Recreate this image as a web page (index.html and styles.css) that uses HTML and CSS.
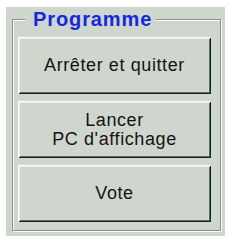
FILE: index.html
```html
<!DOCTYPE html>
<html lang="fr">
<head>
<meta charset="utf-8">
<title>Programme</title>
<link rel="stylesheet" href="styles.css">
</head>
<body>
<div class="panel">
  <div class="group">
    <div class="group-title">Programme</div>
    <button class="btn">Arrêter et quitter</button>
    <button class="btn">Lancer<br>PC d'affichage</button>
    <button class="btn">Vote</button>
  </div>
</div>
</body>
</html>
```
FILE: styles.css
```css
html, body {
  margin: 0;
  padding: 0;
  background: #ffffff;
}
.panel {
  margin: 7px 0 0 6px;
  width: 219px;
  height: 229px;
  background: #cfd6cd;
  padding: 12px 0 0 6px;
  box-sizing: border-box;
}
.group {
  position: relative;
  width: 209px;
  height: 212px;
  box-sizing: border-box;
  border: 1px solid #87918a;
  box-shadow: 1px 1px 0 #ffffff, inset 1px 1px 0 #ffffff;
  padding: 17px 9px 8px 5px;
  display: flex;
  flex-direction: column;
  gap: 7px;
}
.group-title {
  position: absolute;
  left: 12px;
  top: -12px;
  padding: 0 4px 0 8px;
  background: #cfd6cd;
  color: #1428dc;
  font-family: "Liberation Sans", Arial, sans-serif;
  font-weight: bold;
  font-size: 20px;
  letter-spacing: 0.9px;
  line-height: 22px;
}
.btn {
  height: 57px;
  width: 193px;
  margin: 0;
  padding: 0;
  background: #cfd6cd;
  border: 0;
  box-shadow: inset 1px 1px 0 #ffffff, inset -1px -1px 0 #17221f, inset 2px 2px 0 #e6ebe4, inset -2px -2px 0 #5f6a64;
  font-family: "Liberation Sans", Arial, sans-serif;
  font-size: 18px;
  letter-spacing: 0.6px;
  line-height: 19px;
  color: #141414;
  text-align: center;
}
```
